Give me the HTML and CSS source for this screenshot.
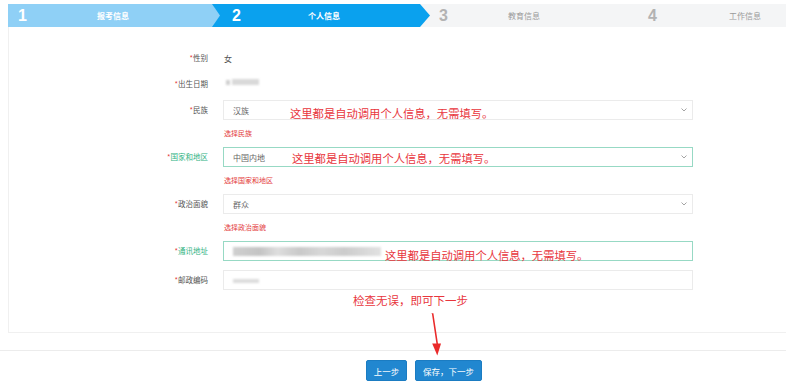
FILE: index.html
```html
<!DOCTYPE html>
<html lang="zh-CN">
<head>
<meta charset="utf-8">
<title>个人信息</title>
<link rel="stylesheet" href="styles.css">
</head>
<body>
<div class="page">
  <div class="steps">
    <div class="step s1"><span class="num">1</span><span class="slabel">报考信息</span></div>
    <div class="step s2"><span class="num">2</span><span class="slabel">个人信息</span></div>
    <div class="step s3"><span class="num">3</span><span class="slabel">教育信息</span></div>
    <div class="step s4"><span class="num">4</span><span class="slabel">工作信息</span></div>
  </div>

  <div class="card">
    <div class="row gap6">
      <div class="lbl"><i>*</i>性别</div>
      <div class="val">女</div>
    </div>
    <div class="row gap6">
      <div class="lbl"><i>*</i>出生日期</div>
      <div class="val"><span class="blur b-date1"></span><span class="blur b-date2"></span></div>
    </div>
    <div class="row gap7">
      <div class="lbl"><i>*</i>民族</div>
      <div class="select"><span>汉族</span><svg class="chev" width="6" height="4" viewBox="0 0 6 4"><path d="M0.5 0.5 L3 3 L5.5 0.5" fill="none" stroke="#9a9a9a" stroke-width="0.9"/></svg></div>
      <div class="err">选择民族</div>
    </div>
    <div class="row gap7">
      <div class="lbl ok"><i>*</i>国家和地区</div>
      <div class="select okb"><span>中国内地</span><svg class="chev" width="6" height="4" viewBox="0 0 6 4"><path d="M0.5 0.5 L3 3 L5.5 0.5" fill="none" stroke="#9a9a9a" stroke-width="0.9"/></svg></div>
      <div class="err">选择国家和地区</div>
    </div>
    <div class="row gap7">
      <div class="lbl"><i>*</i>政治面貌</div>
      <div class="select"><span>群众</span><svg class="chev" width="6" height="4" viewBox="0 0 6 4"><path d="M0.5 0.5 L3 3 L5.5 0.5" fill="none" stroke="#9a9a9a" stroke-width="0.9"/></svg></div>
      <div class="err">选择政治面貌</div>
    </div>
    <div class="row gap9">
      <div class="lbl ok"><i>*</i>通讯地址</div>
      <div class="input okb"><span class="blur b-addr"></span></div>
    </div>
    <div class="row">
      <div class="lbl"><i>*</i>邮政编码</div>
      <div class="input"><span class="blur b-zip"></span></div>
    </div>
  </div>

  <div class="footer">
    <button class="btn">上一步</button>
    <button class="btn">保存，下一步</button>
  </div>

  <p class="note n1">这里都是自动调用个人信息，无需填写。</p>
  <p class="note n2">这里都是自动调用个人信息，无需填写。</p>
  <p class="note n3">这里都是自动调用个人信息，无需填写。</p>
  <p class="note n4">检查无误，即可下一步</p>
  <svg class="arrow" width="786" height="390" viewBox="0 0 786 390">
    <polygon points="430.6,313 431.8,313 436.6,345 438.2,345 433.4,313.2" fill="#ea2a2a"/>
    <polygon points="432.2,343.5 441,343.5 437.3,355.5" fill="#ea2a2a"/>
  </svg>
</div>
</body>
</html>
```

FILE: styles.css
```css
* { box-sizing: border-box; }
html, body { margin: 0; padding: 0; background: #fff; }
body { font-family: "Noto Sans CJK SC", "Noto Sans", sans-serif; color: #555; }

.page { position: relative; width: 786px; height: 390px; overflow: hidden; }

/* steps */
.steps {
  display: flex;
  margin: 4px 0 0 8px;
  height: 23px;
  background: #f4f5f6;
}
.step {
  position: relative;
  display: flex;
  align-items: center;
  height: 23px;
}
.num {
  font-family: "Liberation Sans", Arial, sans-serif;
  font-weight: bold;
  font-size: 16px;
  line-height: 23px;
  width: 10px;
}
.slabel {
  font-size: 8px;
  line-height: 23px;
}
.s1 {
  width: 212px;
  padding-left: 10px;
  background: #8fd0f6;
  color: #fff;
  z-index: 3;
  clip-path: polygon(0 0, calc(100% - 8px) 0, 100% 50%, calc(100% - 8px) 100%, 0 100%);
}
.s1 .slabel { margin-left: 69px; font-weight: bold; }
.s2 {
  width: 218px;
  margin-left: -8px;
  padding-left: 20px;
  background: #0aa1ee;
  color: #fff;
  z-index: 2;
  clip-path: polygon(0 0, calc(100% - 10px) 0, 100% 50%, calc(100% - 10px) 100%, 0 100%);
}
.s2 .slabel { margin-left: 66px; font-weight: bold; }
.s3 { width: 210px; padding-left: 9px; color: #b3b3b3; }
.s3 .slabel { margin-left: 59px; color: #9a9a9a; }
.s4 { flex: 1; padding-left: 8px; color: #b3b3b3; }
.s4 .slabel { margin-left: 71px; color: #9a9a9a; }

/* card */
.card {
  margin-left: 8px;
  padding: 21px 0 42px 0;
  border: 1px solid #f0f0f0;
  border-top: 0;
  border-right: 0;
}
.row {
  display: grid;
  grid-template-columns: 199px 470px;
  column-gap: 15px;
  align-items: center;
}
.gap6 { margin-bottom: 6px; }
.gap7 { margin-bottom: 7px; }
.gap9 { margin-bottom: 9px; }
.lbl {
  height: 20px;
  line-height: 20px;
  text-align: right;
  font-size: 7.5px;
  color: #555;
}
.lbl i { font-style: normal; color: #e33a3a; }
.lbl.ok { color: #2fb383; }
.val {
  height: 20px;
  display: flex;
  align-items: center;
  font-size: 8px;
  color: #555;
  padding-left: 1px;
}
.select, .input {
  height: 20px;
  border: 1px solid #ebebeb;
  display: flex;
  align-items: center;
  justify-content: space-between;
  padding: 0 5px 0 9px;
  font-size: 8px;
  color: #666;
}
.okb { border-color: #97d9c4; }
.chev { display: block; }
.err {
  grid-column: 2;
  margin-top: 6px;
  height: 14px;
  line-height: 14px;
  font-size: 7px;
  color: #e33a3a;
  padding-left: 1px;
}

/* blurred personal data */
.blur { display: inline-block; filter: blur(1.2px); }
.b-date1 { width: 4px; height: 5px; background: #cfcfcf; margin-left: 2px; margin-top: -4px; }
.b-date2 { width: 27px; height: 6px; background: #d9d9d9; margin-left: 2px; margin-top: -4px; }
.b-addr {
  width: 148px; height: 9px;
  background: linear-gradient(90deg, #d0d0d0 0%, #c4c4c4 18%, #dedede 30%, #c9c9c9 45%, #d8d8d8 60%, #cccccc 75%, #e2e2e2 100%);
  margin-right: auto;
}
.b-zip { width: 26px; height: 4px; background: #dcdcdc; margin-right: auto; margin-top: 2px; }

/* footer */
.footer {
  margin-top: 17px;
  border-top: 1px solid #ececec;
  padding: 9px 0 0 366px;
  display: flex;
  gap: 8px;
}
.btn {
  height: 21px;
  padding: 0;
  border: 1px solid #1b7cc2;
  border-radius: 2px;
  background: #2187d0;
  color: #fff;
  font-family: "Noto Sans CJK SC", sans-serif;
  font-size: 8.5px;
}
.btn:first-child { width: 41px; }
.btn:last-child { width: 67px; }

/* annotations */
.note {
  position: absolute;
  margin: 0;
  font-size: 11.3px;
  line-height: 14px;
  color: #e8353c;
  white-space: nowrap;
}
.n1 { left: 290px; top: 106px; }
.n2 { left: 292px; top: 151px; }
.n3 { left: 385px; top: 248px; }
.n4 { left: 353px; top: 293px; font-size: 11.5px; }
.arrow { position: absolute; left: 0; top: 0; pointer-events: none; }
```
